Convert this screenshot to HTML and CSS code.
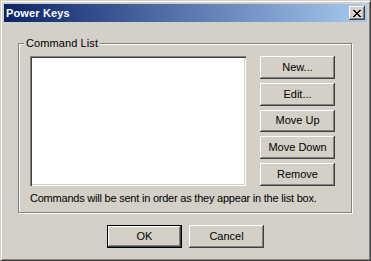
FILE: index.html
```html
<!DOCTYPE html>
<html>
<head>
<meta charset="utf-8">
<link rel="stylesheet" href="styles.css">
</head>
<body>
<div class="window">
  <div class="titlebar">
    <span class="title">Power Keys</span>
    <div class="close">
      <svg width="8" height="7" viewBox="0 0 8 7" shape-rendering="crispEdges"><path fill="#000" d="M0 0h2v1H0zM6 0h2v1H6zM1 1h2v1H1zM5 1h2v1H5zM2 2h4v1H2zM3 3h2v1H3zM2 4h4v1H2zM1 5h2v1H1zM5 5h2v1H5zM0 6h2v1H0zM6 6h2v1H6z"/></svg>
    </div>
  </div>
  <div class="content">
    <div class="group">
      <span class="legend">Command List</span>
      <div class="row">
        <div class="listbox"></div>
        <div class="buttons">
          <div class="btn">New...</div>
          <div class="btn">Edit...</div>
          <div class="btn">Move Up</div>
          <div class="btn">Move Down</div>
          <div class="btn">Remove</div>
        </div>
      </div>
      <div class="note">Commands will be sent in order as they appear in the list box.</div>
    </div>
    <div class="actions">
      <div class="btn default">OK</div>
      <div class="btn">Cancel</div>
    </div>
  </div>
</div>
</body>
</html>
```
FILE: styles.css
```css
html, body {
  margin: 0;
  padding: 0;
  background: #d4d0c8;
}
body {
  font-family: "Liberation Sans", Arial, sans-serif;
  font-size: 11px;
  color: #000;
}
.window {
  box-sizing: border-box;
  width: 371px;
  height: 261px;
  border: 1px solid;
  border-color: #d4d0c8 #404040 #404040 #d4d0c8;
  box-shadow: inset 1px 1px #fff, inset -1px -1px #808080;
  padding: 3px;
  background: #d4d0c8;
}
.titlebar {
  height: 18px;
  display: flex;
  align-items: center;
  justify-content: space-between;
  background: linear-gradient(to right, #0a246a, #a6caf0);
  padding-left: 2px;
}
.title {
  color: #fff;
  font-weight: bold;
  font-size: 11px;
  line-height: 13px;
  letter-spacing: 0.15px;
}
.close {
  width: 16px;
  height: 14px;
  box-sizing: border-box;
  margin-right: 2px;
  background: #d4d0c8;
  box-shadow: inset -1px -1px #404040, inset 1px 1px #fff, inset -2px -2px #808080, inset 2px 2px #d4d0c8;
  display: flex;
  align-items: center;
  justify-content: center;
}
.close svg {
  display: block;
  margin-left: -1px;
}
.content {
  padding: 21px 0 0 14px;
}
.group {
  position: relative;
  box-sizing: border-box;
  width: 334px;
  height: 170px;
  border: 1px solid #808080;
  box-shadow: inset 1px 1px #fff, 1px 1px #fff;
  padding: 12px 0 0 11px;
}
.legend {
  position: absolute;
  left: 5px;
  top: -7px;
  padding: 0 2px;
  background: #d4d0c8;
  line-height: 13px;
  letter-spacing: 0.1px;
}
.row {
  display: flex;
  height: 130px;
}
.listbox {
  width: 216px;
  height: 130px;
  box-sizing: border-box;
  background: #fff;
  box-shadow: inset 1px 1px #808080, inset 2px 2px #404040, inset -1px -1px #fff, inset -2px -2px #d4d0c8;
}
.buttons {
  margin-left: 14px;
  display: flex;
  flex-direction: column;
  gap: 4px;
}
.btn {
  box-sizing: border-box;
  width: 75px;
  height: 23px;
  display: flex;
  align-items: center;
  justify-content: center;
  background: #d4d0c8;
  box-shadow: inset -1px -1px #404040, inset 1px 1px #fff, inset -2px -2px #808080, inset 2px 2px #d4d0c8;
  line-height: 13px;
}
.btn.default {
  border: 1px solid #000;
}
.note {
  margin-top: 6px;
  line-height: 13px;
  letter-spacing: -0.22px;
}
.actions {
  display: flex;
  justify-content: center;
  gap: 7px;
  margin: 12px 0 0 -14px;
}
```
